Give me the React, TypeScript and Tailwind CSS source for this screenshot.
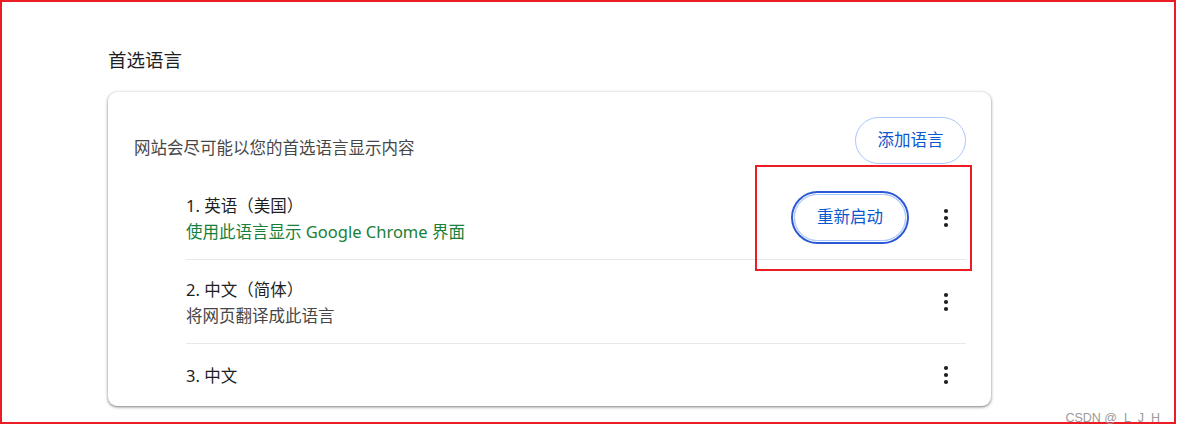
const fontStack = "font-['Noto_Sans','Noto_Sans_CJK_SC',sans-serif]"

const Kebab = () => (
  <button className="flex h-10 w-10 items-center justify-center text-[#1f1f1f]">
    <svg width="6" height="20" viewBox="0 0 6 20">
      <circle cx="3" cy="3" r="2.1" fill="currentColor" />
      <circle cx="3" cy="10" r="2.1" fill="currentColor" />
      <circle cx="3" cy="17" r="2.1" fill="currentColor" />
    </svg>
  </button>
)

const languages = [
  { label: '1. 英语（美国）', sub: '使用此语言显示 Google Chrome 界面', green: true, restart: true, h: 'h-[84px]' },
  { label: '2. 中文（简体）', sub: '将网页翻译成此语言', green: false, restart: false, h: 'h-[84px]' },
  { label: '3. 中文', sub: '', green: false, restart: false, h: 'h-[62px]' },
]

const App = () => {
  return (
    <div className={`relative h-[424px] w-[1176px] border-2 border-[#ec1c24] bg-white ${fontStack}`}>
      <div className="pl-[106px] pt-[45px]">
        <h2 className="text-[18.5px] leading-[26px] text-[#1f1f1f]">首选语言</h2>

        <div className="mt-[19px] h-[314px] w-[883px] rounded-[9px] bg-white pl-[26px] pr-[25px] pt-[25px] shadow-[0_1px_3px_1px_rgba(0,0,0,0.2),0_1px_2px_rgba(0,0,0,0.28)]">
          <div className="flex items-end justify-between">
            <p className="pb-[5px] text-[16.5px] leading-[22px] text-[#474747]">网站会尽可能以您的首选语言显示内容</p>
            <button className="flex h-[47px] w-[111px] items-center justify-center rounded-full border border-[#a8c7fa] text-[16.5px] text-[#0b57d0]">
              添加语言
            </button>
          </div>

          <ul className="ml-[52px] mt-[12px]">
            {languages.map((lang, i) => (
              <li
                key={lang.label}
                className={`flex ${lang.h} items-center justify-between ${i < languages.length - 1 ? 'border-b border-[#e8e8e8]' : ''}`}
              >
                <div className="pt-[2px] text-[16.5px] leading-[26px]">
                  <div className="text-[#1f1f1f]">{lang.label}</div>
                  {lang.sub && (
                    <div className={lang.green ? 'text-[#188038]' : 'text-[#474747]'}>{lang.sub}</div>
                  )}
                </div>
                <div className="flex items-center">
                  {lang.restart && (
                    <button className="mr-[20px] flex h-[47px] w-[112px] items-center justify-center rounded-full border border-[#a8c7fa] text-[16.5px] text-[#0b57d0] shadow-[0_0_0_1px_#ffffff,0_0_0_3px_#2c58d5]">
                      重新启动
                    </button>
                  )}
                  <Kebab />
                </div>
              </li>
            ))}
          </ul>
        </div>
      </div>

      {/* annotation box */}
      <div className="absolute left-[753px] top-[163px] h-[106px] w-[217px] border-2 border-[#ec1c24]" />

      <span className="absolute bottom-[-3px] right-[7px] font-['Liberation_Sans',sans-serif] text-[12.5px] leading-[14px] text-[#9a9a9a]">
        CSDN @_L_J_H_
      </span>
    </div>
  )
}

export default App
